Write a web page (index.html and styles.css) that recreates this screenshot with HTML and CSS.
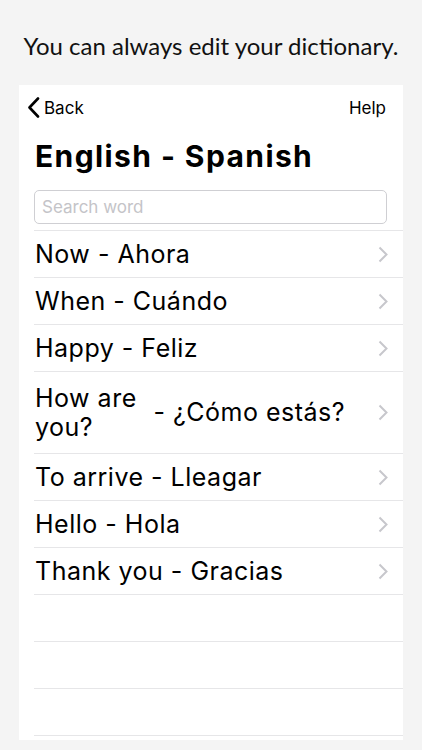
FILE: index.html
```html
<!DOCTYPE html>
<html>
<head>
<meta charset="utf-8">
<link rel="stylesheet" href="styles.css">
</head>
<body>
<div class="screen">
  <p class="caption">You can always edit your dictionary.</p>
  <div class="card">
    <div class="nav">
      <div class="back">
        <svg class="back-icon" width="13" height="21" viewBox="0 0 13 21"><path d="M11 1.5 L2.5 10.5 L11 19.5" fill="none" stroke="#000" stroke-width="2.6" stroke-linecap="round" stroke-linejoin="round"/></svg>
        <span>Back</span>
      </div>
      <span class="help">Help</span>
    </div>
    <h1 class="title">English - Spanish</h1>
    <div class="search"><span class="placeholder">Search word</span></div>
    <ul class="list">
      <li class="row"><div class="pair"><span class="en">Now</span><span class="es">&nbsp;- Ahora</span></div><svg class="chev" width="10" height="17" viewBox="0 0 10 17"><path d="M1.5 1.5 L8.5 8.5 L1.5 15.5" fill="none" stroke="#c7c7cc" stroke-width="2"/></svg></li>
      <li class="row"><div class="pair"><span class="en">When</span><span class="es">&nbsp;- Cuándo</span></div><svg class="chev" width="10" height="17" viewBox="0 0 10 17"><path d="M1.5 1.5 L8.5 8.5 L1.5 15.5" fill="none" stroke="#c7c7cc" stroke-width="2"/></svg></li>
      <li class="row"><div class="pair"><span class="en">Happy</span><span class="es">&nbsp;- Feliz</span></div><svg class="chev" width="10" height="17" viewBox="0 0 10 17"><path d="M1.5 1.5 L8.5 8.5 L1.5 15.5" fill="none" stroke="#c7c7cc" stroke-width="2"/></svg></li>
      <li class="row tall"><div class="pair"><span class="en">How are you?</span><span class="es">&nbsp;- ¿Cómo estás?</span></div><svg class="chev" width="10" height="17" viewBox="0 0 10 17"><path d="M1.5 1.5 L8.5 8.5 L1.5 15.5" fill="none" stroke="#c7c7cc" stroke-width="2"/></svg></li>
      <li class="row"><div class="pair"><span class="en">To arrive</span><span class="es">&nbsp;- Lleagar</span></div><svg class="chev" width="10" height="17" viewBox="0 0 10 17"><path d="M1.5 1.5 L8.5 8.5 L1.5 15.5" fill="none" stroke="#c7c7cc" stroke-width="2"/></svg></li>
      <li class="row"><div class="pair"><span class="en">Hello</span><span class="es">&nbsp;- Hola</span></div><svg class="chev" width="10" height="17" viewBox="0 0 10 17"><path d="M1.5 1.5 L8.5 8.5 L1.5 15.5" fill="none" stroke="#c7c7cc" stroke-width="2"/></svg></li>
      <li class="row"><div class="pair"><span class="en">Thank you</span><span class="es">&nbsp;- Gracias</span></div><svg class="chev" width="10" height="17" viewBox="0 0 10 17"><path d="M1.5 1.5 L8.5 8.5 L1.5 15.5" fill="none" stroke="#c7c7cc" stroke-width="2"/></svg></li>
      <li class="row empty"></li>
      <li class="row empty"></li>
      <li class="row empty"></li>
    </ul>
  </div>
</div>
</body>
</html>
```

FILE: styles.css
```css
* { box-sizing: border-box; }
html, body { margin: 0; padding: 0; }
body {
  width: 422px;
  height: 750px;
  overflow: hidden;
  background: #f4f4f4;
  font-family: Inter, "Liberation Sans", sans-serif;
  color: #000;
}
.screen {
  display: flex;
  flex-direction: column;
  height: 750px;
}
.caption {
  margin: 0;
  height: 85px;
  display: flex;
  align-items: center;
  justify-content: center;
  padding-top: 6px;
  font-family: Lato, "Open Sans", sans-serif;
  font-size: 24px;
  color: #111;
}
.card {
  margin: 0 19px;
  height: 655px;
  background: #fff;
  overflow: hidden;
  display: flex;
  flex-direction: column;
}
.nav {
  height: 45px;
  display: flex;
  align-items: center;
  justify-content: space-between;
  padding: 0 17px 0 8px;
  font-size: 17px;
}
.back {
  display: flex;
  align-items: center;
  gap: 4px;
}
.title {
  margin: 0;
  padding: 0 0 0 16px;
  height: 52px;
  display: flex;
  align-items: center;
  font-size: 30px;
  font-weight: 700;
  letter-spacing: 1.4px;
}
.search {
  margin: 8px 16px 6px 15px;
  height: 34px;
  border: 1px solid #cfcfd3;
  border-radius: 5px;
  display: flex;
  align-items: center;
  padding-left: 7px;
}
.placeholder {
  color: #c4c4c8;
  font-size: 17px;
}
.list {
  list-style: none;
  margin: 0 0 0 15px;
  padding: 0;
  border-top: 1px solid #e6e6e8;
}
.row {
  height: 47px;
  border-bottom: 1px solid #e6e6e8;
  display: flex;
  align-items: center;
  justify-content: space-between;
  padding: 0 15px 0 1px;
  font-size: 25px;
  letter-spacing: 0.5px;
}
.row.tall {
  height: 82px;
  line-height: 29px;
}
.pair {
  display: flex;
  align-items: center;
  max-width: 310px;
}
.en { flex: 0 1 auto; }
.es { flex: none; white-space: nowrap; }
.chev { flex: none; }
```
